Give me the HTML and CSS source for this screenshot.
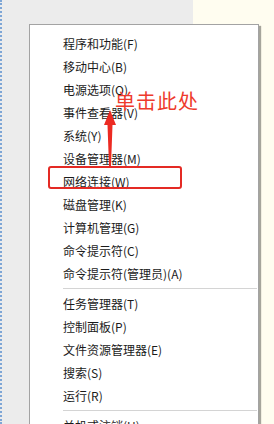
FILE: index.html
```html
<!DOCTYPE html>
<html lang="zh-CN">
<head>
<meta charset="utf-8">
<link rel="stylesheet" href="styles.css">
</head>
<body>
<div class="desk">
  <div class="pane-left"></div>
  <div class="pane-right"></div>
</div>
<div class="menu">
  <ul class="group">
    <li>程序和功能(F)</li>
    <li>移动中心(B)</li>
    <li>电源选项(O)</li>
    <li>事件查看器(V)</li>
    <li>系统(Y)</li>
    <li>设备管理器(M)</li>
    <li>网络连接(W)</li>
    <li>磁盘管理(K)</li>
    <li>计算机管理(G)</li>
    <li>命令提示符(C)</li>
    <li>命令提示符(管理员)(A)</li>
  </ul>
  <div class="sep"></div>
  <ul class="group">
    <li>任务管理器(T)</li>
    <li>控制面板(P)</li>
    <li>文件资源管理器(E)</li>
    <li>搜索(S)</li>
    <li>运行(R)</li>
  </ul>
  <div class="sep"></div>
  <ul class="group">
    <li class="sub">关机或注销(U)<span class="chev">&gt;</span></li>
  </ul>
</div>
<div class="highlight"></div>
<div class="note">单击此处</div>
<svg class="arrow" width="20" height="60" viewBox="0 0 20 60">
  <path d="M10 0 L16 15 L12.5 15 L11 56 L9 56 L7.5 15 L4 15 Z" fill="#ec2a22"/>
</svg>
</body>
</html>
```
FILE: styles.css
```css
html, body {
  margin: 0;
  padding: 0;
  width: 274px;
  height: 424px;
  overflow: hidden;
}
body {
  position: relative;
  font-family: "Noto Sans CJK SC", "Noto Sans", sans-serif;
}
.desk {
  display: grid;
  grid-template-columns: 193px 1fr;
  height: 424px;
}
.pane-left {
  background: #ececec;
  border-left: 2px dotted #7ea6d6;
}
.pane-right {
  background: #fffdf0;
}
.menu {
  position: absolute;
  left: 29px;
  top: 24px;
  width: 230px;
  height: 420px;
  background: #ffffff;
  border: 1px solid #a3a3a3;
  box-shadow: 2px 2px 1px rgba(0,0,0,0.35);
  padding-top: 7px;
  box-sizing: border-box;
}
.group {
  list-style: none;
  margin: 0;
  padding: 0;
}
.group li {
  height: 23px;
  line-height: 23px;
  padding-left: 33px;
  font-size: 12px;
  color: #1b1b1b;
  white-space: nowrap;
  position: relative;
}
.sep {
  height: 1px;
  background: #d4d4d4;
  margin: 3px 1px 3px 33px;
}
.sep + .group li:first-child { }
.group + .sep + .group { }
.group:nth-of-type(3) li { margin-top: 3px; }
.chev {
  position: absolute;
  right: 12px;
  top: 0;
  color: #333;
}
.highlight {
  position: absolute;
  left: 48px;
  top: 166px;
  width: 134px;
  height: 23px;
  border: 2px solid #e42a24;
  border-radius: 3px;
  box-sizing: border-box;
}
.note {
  position: absolute;
  left: 115px;
  top: 88px;
  font-size: 20px;
  line-height: 26px;
  color: #ee3a2c;
  letter-spacing: 1px;
}
.arrow {
  position: absolute;
  left: 100px;
  top: 110px;
}
```
